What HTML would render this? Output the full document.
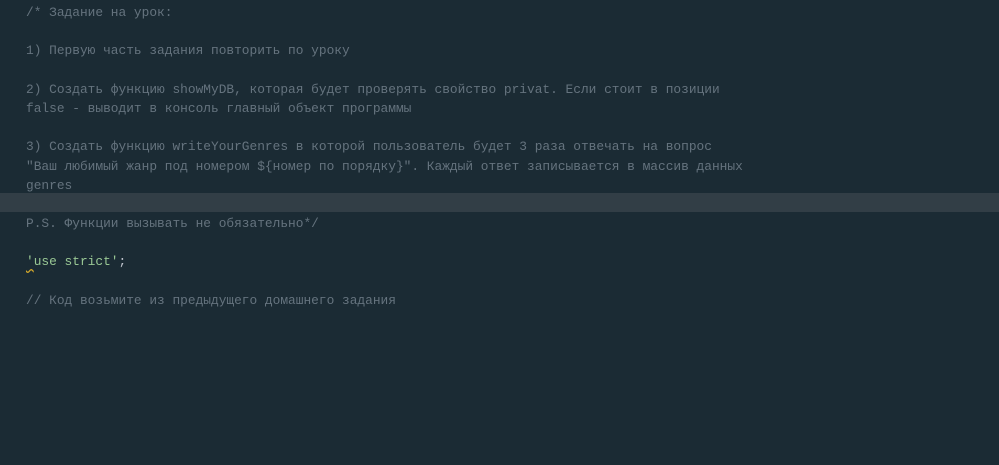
<!DOCTYPE html>
<html><head><meta charset="utf-8"><style>
html,body{margin:0;padding:0;background:#1b2b34;width:999px;height:465px;overflow:hidden}
.c{position:absolute;left:0;top:1px;width:999px;font-family:"Liberation Mono","DejaVu Sans Mono",monospace;font-size:12.85px;line-height:19.2px;color:#65737e}
.l{padding-left:26px;height:19.2px;white-space:pre;position:relative}
.l span.t{position:relative;top:2px}
.h{background:#323e46}
.s{color:#99c794}.p{color:#c0c5ce}
.u{text-decoration:underline wavy #d3a82a;text-underline-offset:3px}
</style></head><body><div class="c"><div class="l"><span class="t">/* Задание на урок:</span></div><div class="l"></div><div class="l"><span class="t">1) Первую часть задания повторить по уроку</span></div><div class="l"></div><div class="l"><span class="t">2) Создать функцию showMyDB, которая будет проверять свойство privat. Если стоит в позиции</span></div><div class="l"><span class="t">false - выводит в консоль главный объект программы</span></div><div class="l"></div><div class="l"><span class="t">3) Создать функцию writeYourGenres в которой пользователь будет 3 раза отвечать на вопрос</span></div><div class="l"><span class="t">"Ваш любимый жанр под номером ${номер по порядку}". Каждый ответ записывается в массив данных</span></div><div class="l"><span class="t">genres</span></div><div class="l h"></div><div class="l"><span class="t">P.S. Функции вызывать не обязательно*/</span></div><div class="l"></div><div class="l"><span class="t"><span class="s"><span class="u">'</span>use strict'</span><span class="p">;</span></span></div><div class="l"></div><div class="l"><span class="t">// Код возьмите из предыдущего домашнего задания</span></div></div></body></html>
